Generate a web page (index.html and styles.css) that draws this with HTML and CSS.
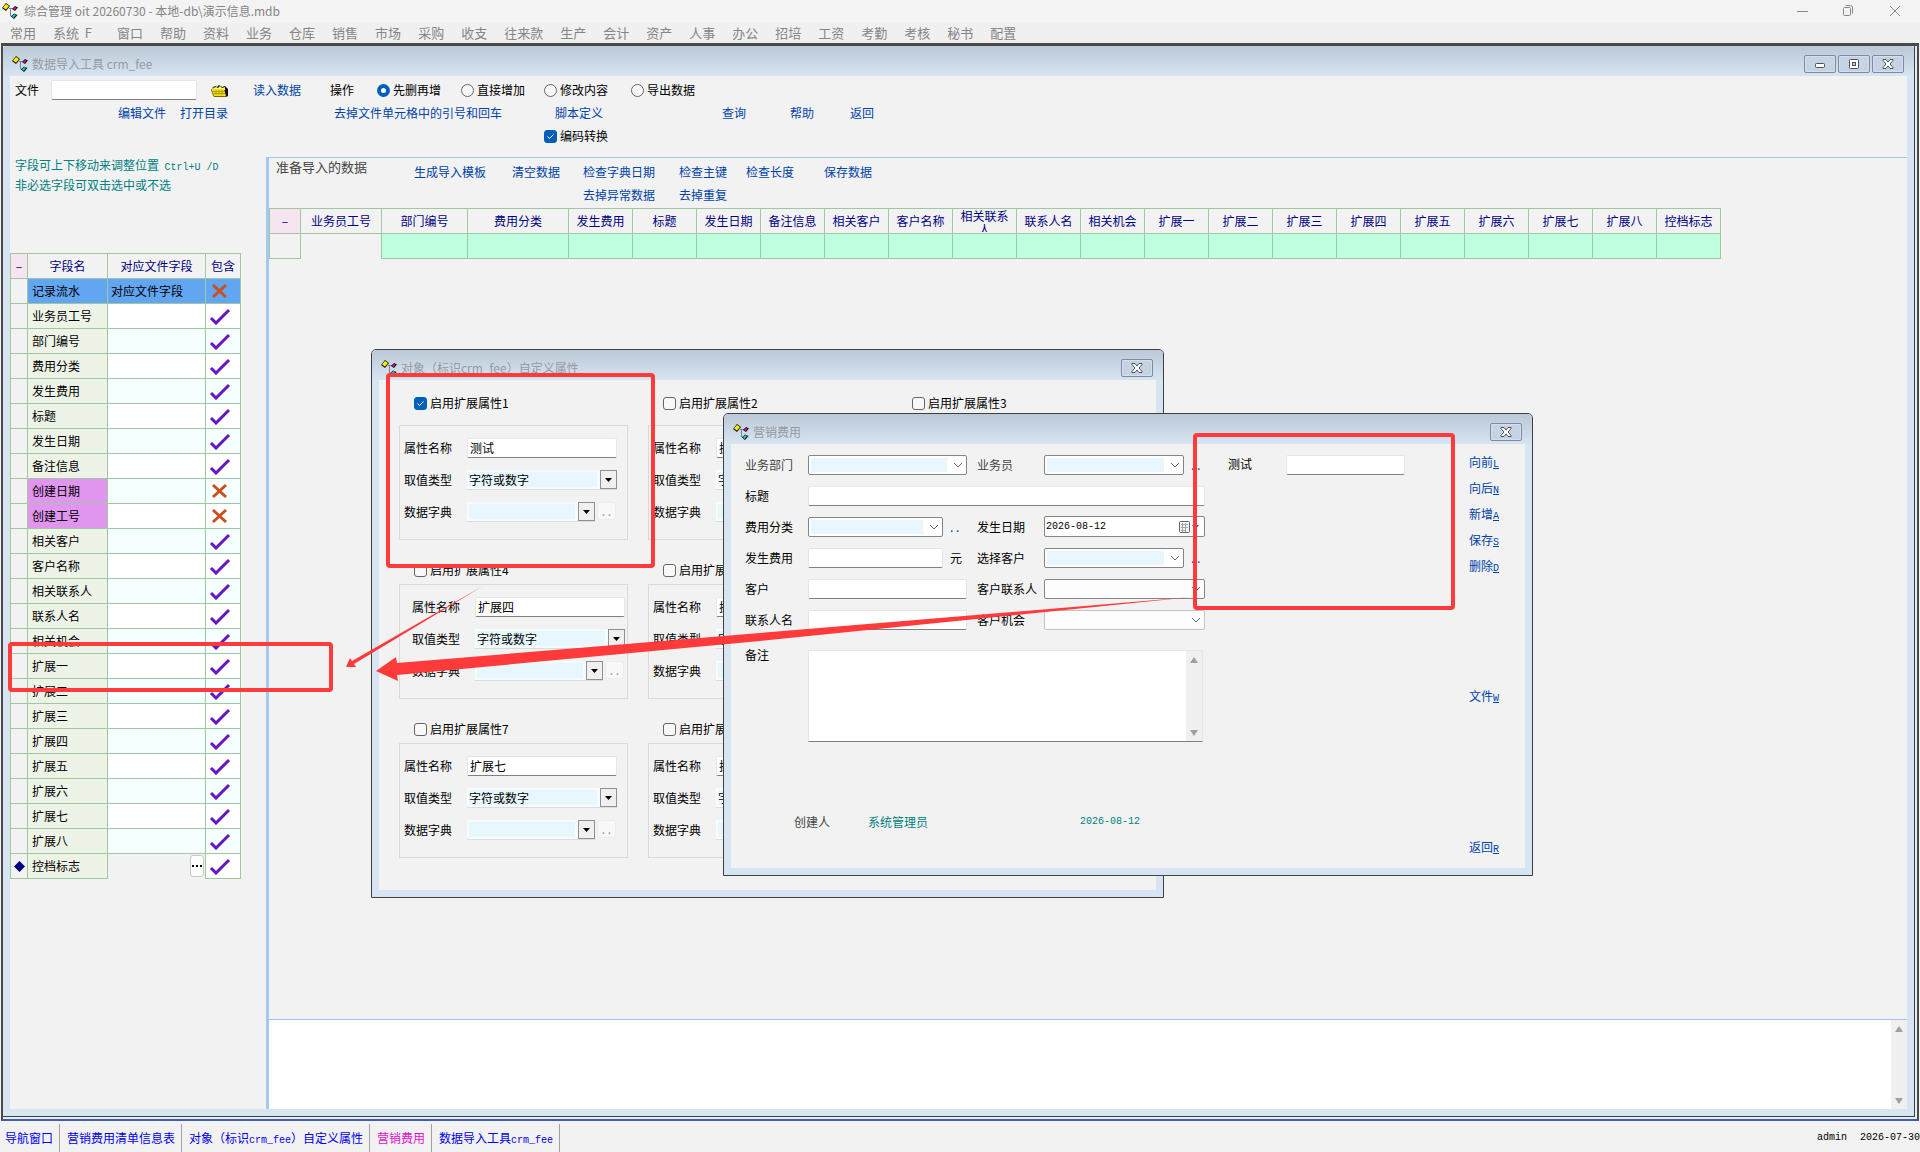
FILE: index.html
```
<!DOCTYPE html>
<html lang="zh-CN">
<head>
  <meta charset="UTF-8">
  <meta name="viewport" content="width=device-width, initial-scale=1.0">
  <title>综合管理 oit 20260730</title>
  <link rel="stylesheet" href="styles.css">
</head>
<body>
  <!-- shared icons -->
  <svg class="sprites" width="0" height="0">
    <symbol id="app" viewBox="0 0 16 16">
      <path d="M7 5.500h4M8.500 6v7h2" fill="none" stroke="#808080"/>
      <path d="M0 5l4-5 4 3-4 5z" fill="#111"/>
      <path d="M1 4.500l3-3.500 3 2-3 3.500z" fill="#ffee00"/>
      <path d="M10 6l3-3 3 1.500-3 3.500z" fill="#111"/>
      <path d="M11 5.500l2-1.500 1.500 1-2 2z" fill="#e000a0"/>
      <path d="M9 13.500l3-3 3.500 1.500-3.500 4z" fill="#111"/>
      <path d="M10 13l2.500-2 1.500 1-2.500 3z" fill="#00d0d0"/>
    </symbol>
    <symbol id="yes" viewBox="0 0 24 18">
      <path d="M2 11l5 5L20 3" fill="none" stroke="#6614c8" stroke-width="3"/>
    </symbol>
    <symbol id="no" viewBox="0 0 24 18">
      <path d="M4 3l13 12M17 3L4 15" fill="none" stroke="#c8501e" stroke-width="3"/>
    </symbol>
    <symbol id="close" viewBox="0 0 12 10">
      <path d="M1 .5h3l2 2.500 2-2.500h3v1L8 5l3 3.500v1H8L6 7 4 9.500H1v-1L4 5 1 1.500z" fill="#fff" stroke="#4a5058"/>
    </symbol>
  </svg>

  <header class="titlebar">
    <svg class="app-icon"><use href="#app"/></svg>
    <h1>综合管理 oit 20260730 - 本地-db\演示信息.mdb</h1>
    <div class="win-controls">
      <button aria-label="最小化"><svg width="12" height="12"><path d="M0 6.500h11" stroke="#888"/></svg></button>
      <button aria-label="还原"><svg width="12" height="12"><path d="M.5 3.500a1 1 0 0 1 1-1h5a1 1 0 0 1 1 1v6a1 1 0 0 1-1 1h-5a1 1 0 0 1-1-1zM2.500.5h5a2 2 0 0 1 2 2v6" fill="none" stroke="#888"/></svg></button>
      <button aria-label="关闭"><svg width="12" height="12"><path d="M1 1l10 10M11 1L1 11" stroke="#888"/></svg></button>
    </div>
  </header>

  <nav class="menu">
    <a href="#">常用</a>
    <a href="#" class="menu-system">系统&nbsp; F</a>
    <a href="#">窗口</a>
    <a href="#">帮助</a>
    <a href="#">资料</a>
    <a href="#">业务</a>
    <a href="#">仓库</a>
    <a href="#">销售</a>
    <a href="#">市场</a>
    <a href="#">采购</a>
    <a href="#">收支</a>
    <a href="#">往来款</a>
    <a href="#">生产</a>
    <a href="#">会计</a>
    <a href="#">资产</a>
    <a href="#">人事</a>
    <a href="#">办公</a>
    <a href="#">招培</a>
    <a href="#">工资</a>
    <a href="#">考勤</a>
    <a href="#">考核</a>
    <a href="#">秘书</a>
    <a href="#">配置</a>
  </nav>

  <main class="mdi">
    <section class="window import">
      <div class="caption">
        <svg class="app-icon"><use href="#app"/></svg>
        <h2>数据导入工具 crm_fee</h2>
        <div class="caption-buttons">
          <button aria-label="最小化"><svg width="12" height="10"><rect x="1.500" y="4.500" width="9" height="4" rx="1" fill="#fff" stroke="#4a5058"/></svg></button>
          <button aria-label="最大化"><svg width="12" height="10"><rect x="1.500" y=".5" width="9" height="9" rx="1" fill="#fff" stroke="#4a5058"/><rect x="4.500" y="3.500" width="3" height="3" fill="#c4d0de" stroke="#4a5058"/></svg></button>
          <button aria-label="关闭"><svg width="12" height="10"><use href="#close"/></svg></button>
        </div>
      </div>

      <div class="client">
        <form class="toolbar">
          <label for="file">文件</label>
          <input type="text" id="file" class="field tb-file">
          <button type="button" class="folder" aria-label="选择文件">
            <svg width="17" height="13"><path d="M1 4l3-2 2 1 2-2 3 2 3-1 3 3v7l-2 1z" fill="#111"/><path d="M2 4l3-1 2 1 2-2 2 2 3-1v3H3z" fill="#fff27a"/><path d="M0 5h13l2 7H3z" fill="#f0e020"/><path d="M2 7.500h11M3 9.500h11M5 6v5M8 6v5M11 6v5" stroke="#b0a400"/><path d="M0 5l3 7.500h12" fill="none" stroke="#706800"/></svg>
          </button>
          <a href="#" class="tb-read">读入数据</a>
          <span class="tb-mode">操作</span>
          <label class="tb-r1"><input type="radio" name="mode" checked>先删再增</label>
          <label class="tb-r2"><input type="radio" name="mode">直接增加</label>
          <label class="tb-r3"><input type="radio" name="mode">修改内容</label>
          <label class="tb-r4"><input type="radio" name="mode">导出数据</label>
          <a href="#" class="tb-edit">编辑文件</a>
          <a href="#" class="tb-open">打开目录</a>
          <a href="#" class="tb-strip">去掉文件单元格中的引号和回车</a>
          <a href="#" class="tb-script">脚本定义</a>
          <a href="#" class="tb-query">查询</a>
          <a href="#" class="tb-help">帮助</a>
          <a href="#" class="tb-back">返回</a>
          <label class="tb-code"><input type="checkbox" checked>编码转换</label>
        </form>

        <div class="panes">
          <aside class="fields">
            <p class="hint">字段可上下移动来调整位置&nbsp; <span class="mono">Ctrl+U /D</span><br>非必选字段可双击选中或不选</p>
            <table class="grid field-grid">
              <colgroup><col class="c-mark"><col class="c-name"><col class="c-map"><col class="c-use"></colgroup>
              <thead>
                <tr><th class="corner">–</th><th>字段名</th><th>对应文件字段</th><th>包含</th></tr>
              </thead>
              <tbody>
                <tr class="selected"><td></td><td>记录流水</td><td>对应文件字段</td><td><svg><use href="#no"/></svg></td></tr>
                <tr><td></td><td>业务员工号</td><td></td><td><svg><use href="#yes"/></svg></td></tr>
                <tr><td></td><td>部门编号</td><td></td><td><svg><use href="#yes"/></svg></td></tr>
                <tr><td></td><td>费用分类</td><td></td><td><svg><use href="#yes"/></svg></td></tr>
                <tr><td></td><td>发生费用</td><td></td><td><svg><use href="#yes"/></svg></td></tr>
                <tr><td></td><td>标题</td><td></td><td><svg><use href="#yes"/></svg></td></tr>
                <tr><td></td><td>发生日期</td><td></td><td><svg><use href="#yes"/></svg></td></tr>
                <tr><td></td><td>备注信息</td><td></td><td><svg><use href="#yes"/></svg></td></tr>
                <tr class="auto"><td></td><td>创建日期</td><td></td><td><svg><use href="#no"/></svg></td></tr>
                <tr class="auto"><td></td><td>创建工号</td><td></td><td><svg><use href="#no"/></svg></td></tr>
                <tr><td></td><td>相关客户</td><td></td><td><svg><use href="#yes"/></svg></td></tr>
                <tr><td></td><td>客户名称</td><td></td><td><svg><use href="#yes"/></svg></td></tr>
                <tr><td></td><td>相关联系人</td><td></td><td><svg><use href="#yes"/></svg></td></tr>
                <tr><td></td><td>联系人名</td><td></td><td><svg><use href="#yes"/></svg></td></tr>
                <tr><td></td><td>相关机会</td><td></td><td><svg><use href="#yes"/></svg></td></tr>
                <tr><td></td><td>扩展一</td><td></td><td><svg><use href="#yes"/></svg></td></tr>
                <tr><td></td><td>扩展二</td><td></td><td><svg><use href="#yes"/></svg></td></tr>
                <tr><td></td><td>扩展三</td><td></td><td><svg><use href="#yes"/></svg></td></tr>
                <tr><td></td><td>扩展四</td><td></td><td><svg><use href="#yes"/></svg></td></tr>
                <tr><td></td><td>扩展五</td><td></td><td><svg><use href="#yes"/></svg></td></tr>
                <tr><td></td><td>扩展六</td><td></td><td><svg><use href="#yes"/></svg></td></tr>
                <tr><td></td><td>扩展七</td><td></td><td><svg><use href="#yes"/></svg></td></tr>
                <tr><td></td><td>扩展八</td><td></td><td><svg><use href="#yes"/></svg></td></tr>
                <tr class="current"><td><svg class="marker" viewBox="0 0 12 12"><path d="M6 0l6 6-6 6-6-6z" fill="#000080"/></svg></td><td>控档标志</td><td><button class="more" aria-label="更多"><svg class="dots3" viewBox="0 0 11 2"><path d="M0 0h2v2H0zM4 0h2v2H4zM8 0h2v2H8z"/></svg></button></td><td><svg><use href="#yes"/></svg></td></tr>
              </tbody>
            </table>
          </aside>

          <section class="data">
            <div class="data-tools">
              <h3>准备导入的数据</h3>
              <a href="#">生成导入模板</a>
              <a href="#">清空数据</a>
              <a href="#">检查字典日期</a>
              <a href="#">检查主键</a>
              <a href="#">检查长度</a>
              <a href="#">保存数据</a>
              <a href="#" class="second-abnormal">去掉异常数据</a>
              <a href="#" class="second-repeat">去掉重复</a>
            </div>
            <table class="grid data-grid">
              <colgroup><col class="d-mark"><col class="d-staff"><col class="d-dept"><col class="d-kind"><col span="18" class="d-std"></colgroup>
              <thead>
                <tr>
                  <th class="corner">–</th>
                  <th>业务员工号</th>
                  <th>部门编号</th>
                  <th>费用分类</th>
                  <th>发生费用</th>
                  <th>标题</th>
                  <th>发生日期</th>
                  <th>备注信息</th>
                  <th>相关客户</th>
                  <th>客户名称</th>
                  <th><div>相关联系人</div></th>
                  <th>联系人名</th>
                  <th>相关机会</th>
                  <th>扩展一</th>
                  <th>扩展二</th>
                  <th>扩展三</th>
                  <th>扩展四</th>
                  <th>扩展五</th>
                  <th>扩展六</th>
                  <th>扩展七</th>
                  <th>扩展八</th>
                  <th>控档标志</th>
                </tr>
              </thead>
              <tbody>
                <tr><td></td><td></td><td></td><td></td><td></td><td></td><td></td><td></td><td></td><td></td><td></td><td></td><td></td><td></td><td></td><td></td><td></td><td></td><td></td><td></td><td></td><td></td></tr>
              </tbody>
            </table>
            <div class="log">
              <textarea aria-label="日志"></textarea>
              <div class="scroll"><span class="up"></span><span class="down"></span></div>
            </div>
          </section>
        </div>
      </div>
    </section>
  </main>

  <footer class="status">
    <a href="#">导航窗口</a>
    <a href="#">营销费用清单信息表</a>
    <a href="#">对象（标识<span class="mono">crm_fee</span>）自定义属性</a>
    <a href="#" class="active">营销费用</a>
    <a href="#">数据导入工具<span class="mono">crm_fee</span></a>
    <span class="mono user">admin</span>
    <span class="mono">2026-07-30</span>
  </footer>

  <section class="window floating attrs">
    <div class="caption">
      <svg class="app-icon"><use href="#app"/></svg>
      <h2>对象（标识crm_fee）自定义属性</h2>
      <div class="caption-buttons"><button aria-label="关闭"><svg width="12" height="10"><use href="#close"/></svg></button></div>
    </div>
    <form class="client attr-list">
      <div class="attr first">
        <label><input type="checkbox" checked>启用扩展属性1</label>
        <fieldset>
          <label for="n1">属性名称</label><input type="text" id="n1" class="field" value="测试">
          <label for="t1">取值类型</label><select id="t1" class="drop"><option>字符或数字</option></select>
          <label for="d1">数据字典</label><div class="dict"><select id="d1" class="drop"></select><button type="button" disabled>. .</button></div>
        </fieldset>
      </div>
      <div class="attr first">
        <label><input type="checkbox">启用扩展属性2</label>
        <fieldset>
          <label for="n2">属性名称</label><input type="text" id="n2" class="field" value="扩展二">
          <label for="t2">取值类型</label><select id="t2" class="drop"><option>字符或数字</option></select>
          <label for="d2">数据字典</label><div class="dict"><select id="d2" class="drop"></select><button type="button" disabled>. .</button></div>
        </fieldset>
      </div>
      <div class="attr first">
        <label><input type="checkbox">启用扩展属性3</label>
      </div>
      <div class="attr indent">
        <label><input type="checkbox">启用扩展属性4</label>
        <fieldset>
          <label for="n4">属性名称</label><input type="text" id="n4" class="field" value="扩展四">
          <label for="t4">取值类型</label><select id="t4" class="drop"><option>字符或数字</option></select>
          <label for="d4">数据字典</label><div class="dict"><select id="d4" class="drop"></select><button type="button" disabled>. .</button></div>
        </fieldset>
      </div>
      <div class="attr">
        <label><input type="checkbox">启用扩展属性5</label>
        <fieldset>
          <label for="n5">属性名称</label><input type="text" id="n5" class="field" value="扩展五">
          <label for="t5">取值类型</label><select id="t5" class="drop"><option>字符或数字</option></select>
          <label for="d5">数据字典</label><div class="dict"><select id="d5" class="drop"></select><button type="button" disabled>. .</button></div>
        </fieldset>
      </div>
      <div></div>
      <div class="attr">
        <label><input type="checkbox">启用扩展属性7</label>
        <fieldset>
          <label for="n7">属性名称</label><input type="text" id="n7" class="field" value="扩展七">
          <label for="t7">取值类型</label><select id="t7" class="drop"><option>字符或数字</option></select>
          <label for="d7">数据字典</label><div class="dict"><select id="d7" class="drop"></select><button type="button" disabled>. .</button></div>
        </fieldset>
      </div>
      <div class="attr">
        <label><input type="checkbox">启用扩展属性8</label>
        <fieldset>
          <label for="n8">属性名称</label><input type="text" id="n8" class="field" value="扩展八">
          <label for="t8">取值类型</label><select id="t8" class="drop"><option>字符或数字</option></select>
          <label for="d8">数据字典</label><div class="dict"><select id="d8" class="drop"></select><button type="button" disabled>. .</button></div>
        </fieldset>
      </div>
    </form>
  </section>

  <section class="window floating fee">
    <div class="caption">
      <svg class="app-icon"><use href="#app"/></svg>
      <h2>营销费用</h2>
      <div class="caption-buttons"><button aria-label="关闭"><svg width="12" height="10"><use href="#close"/></svg></button></div>
    </div>
    <form class="client fee-body">
      <div class="fee-main">
        <div class="fee-grid">
          <label for="dept" class="soft">业务部门</label>
          <div><select id="dept" class="combo w-mid"></select></div>
          <label for="staff" class="soft">业务员</label>
          <div><select id="staff" class="combo w-pick"></select><a href="#" class="pick" aria-label="选择业务员">. .</a></div>

          <label for="subject">标题</label>
          <div class="wide"><input type="text" id="subject" class="field"></div>

          <label for="kind">费用分类</label>
          <div><select id="kind" class="combo w-short"></select><a href="#" class="pick" aria-label="选择分类">. .</a></div>
          <label for="day">发生日期</label>
          <div class="date">
            <input type="text" id="day" value="2026-08-12">
            <svg width="26" height="14"><rect x="1.500" y="1.500" width="10" height="11" rx="1" fill="#f4f4f8" stroke="#666"/><path d="M3 4.500h7M3 7.500h7M3 10.500h5M4.500 3v9M7.500 3v9" stroke="#9aa8c0"/><path d="M14 5h7l-3.500 4z" fill="#2a4a80"/></svg>
          </div>

          <label for="amount">发生费用</label>
          <div><input type="text" id="amount" class="field w-short"><span>元</span></div>
          <label for="cust">选择客户</label>
          <div><select id="cust" class="combo w-pick"></select><a href="#" class="pick" aria-label="选择客户">. .</a></div>

          <label for="client">客户</label>
          <div><input type="text" id="client" class="field w-mid"></div>
          <label for="contact">客户联系人</label>
          <div><select id="contact" class="combo plain"></select></div>

          <label for="cname">联系人名</label>
          <div><input type="text" id="cname" class="field w-mid"></div>
          <label for="chance">客户机会</label>
          <div><select id="chance" class="combo plain off"></select></div>
        </div>
        <div class="remark">
          <label for="remark">备注</label>
          <div class="memo">
            <textarea id="remark"></textarea>
            <div class="scroll"><span class="up"></span><span class="down"></span></div>
          </div>
        </div>
        <div class="created">
          <span class="soft">创建人</span>
          <span>系统管理员</span>
          <span class="mono">2026-08-12</span>
        </div>
      </div>
      <div class="fee-extra">
        <label for="ext1">测试</label>
        <input type="text" id="ext1" class="field">
      </div>
      <div class="fee-actions">
        <a href="#">向前<u class="mono">L</u></a>
        <a href="#">向后<u class="mono">N</u></a>
        <a href="#">新增<u class="mono">A</u></a>
        <a href="#">保存<u class="mono">S</u></a>
        <a href="#">删除<u class="mono">D</u></a>
        <a href="#" class="act-file">文件<u class="mono">W</u></a>
        <a href="#" class="act-back">返回<u class="mono">R</u></a>
      </div>
    </form>
  </section>

  <!-- red marks over the windows -->
  <svg class="marks" width="1470" height="700">
    <g fill="none" stroke="#ff3a3a" stroke-width="4">
      <rect x="388" y="375" width="265" height="191" rx="2"/>
      <rect x="1195" y="435" width="258" height="173" rx="2"/>
      <rect x="10" y="644" width="321" height="46" rx="2"/>
    </g>
    <g fill="#ff3a3a">
      <path d="M346 667l4-9 2 3L483 586 354 664l2 3z"/>
      <path d="M376 671l20-14 1 6L760 633 1192 597 760 641 397 675l1 6z"/>
    </g>
  </svg>
</body>
</html>
```
FILE: styles.css
```
* {
  box-sizing: border-box;
}

body {
  margin: 0;
  min-height: 100vh;
  display: flex;
  flex-direction: column;
  position: relative;
  overflow: hidden;
  background: #f2f2f2;
  color: #000;
  font: 12px/16px "Noto Sans CJK SC", sans-serif;
}

a {
  color: #0042a8;
  text-decoration: none;
  white-space: nowrap;
}

h1, h2, h3, p {
  margin: 0;
  font-size: 12px;
  font-weight: normal;
}

label, span {
  white-space: nowrap;
}

input, select, textarea, button {
  font: inherit;
  color: inherit;
  margin: 0;
  border-radius: 0;
}

.sprites {
  position: absolute;
}

.mono {
  font-family: "Liberation Mono", monospace;
  font-size: 10px;
}

.app-icon {
  width: 16px;
  height: 16px;
  flex: none;
}

/* main title bar and menu */
.titlebar {
  height: 23px;
  display: flex;
  align-items: center;
  gap: 6px;
  padding: 0 2px 2px;
  background: #f3f3f3;
}

.titlebar h1 {
  color: #858585;
}

.win-controls {
  margin-left: auto;
  display: flex;
  gap: 34px;
  padding-right: 17px;
}

.win-controls button {
  display: flex;
  padding: 0;
  border: 0;
  background: none;
}

.menu {
  height: 20px;
  display: flex;
  align-items: center;
  gap: 17px;
  padding-left: 10px;
  background: #f0f0f0;
  font-size: 13px;
}

.menu a {
  color: #858585;
}

.menu-system {
  width: 47px;
}

/* desktop area and windows */
.mdi {
  flex: 1;
  display: flex;
  margin: 0 1px 1px;
  padding: 0 2px 2px 0;
  border: 2px solid #4a4a4a;
  border-top-width: 3px;
  border-bottom-color: #3d5fae;
  background: #e4ecf5;
}

.window {
  display: flex;
  flex-direction: column;
  padding: 0 7px 7px;
  border: 1px solid #404040;
  background: #d7e4f2;
}

.import {
  flex: 1;
  min-width: 0;
  border-width: 0 1px 1px 0;
}

.floating {
  position: absolute;
  border-radius: 5px 5px 0 0;
}

.caption {
  height: 30px;
  flex: none;
  display: flex;
  align-items: center;
  gap: 4px;
  margin: 0 -7px;
  padding: 5px 2px 0 9px;
  background: linear-gradient(#bbc9d7, #d7e4f2);
  border-radius: 4px 4px 0 0;
}

.caption h2 {
  color: #969ba2;
}

.caption-buttons {
  margin-left: auto;
  display: flex;
  gap: 2px;
  padding-right: 8px;
}

.caption-buttons button {
  width: 32px;
  height: 18px;
  display: flex;
  align-items: center;
  justify-content: center;
  padding: 0;
  border: 1px solid #7c8aa5;
  border-radius: 2px;
  background: #c6d3e2;
  box-shadow: inset 0 0 0 1px #d5dfea;
}

.client {
  flex: 1;
  background: #f2f2f2;
}

/* controls */
.field {
  width: 100%;
  height: 20px;
  padding: 0 2px 2px;
  border: 1px solid #e6e6e6;
  border-bottom-color: #808080;
  border-radius: 2px;
  background: #fff;
}

input[type="checkbox"],
input[type="radio"] {
  appearance: none;
  width: 13px;
  height: 13px;
  flex: none;
  border: 1px solid #666;
  border-radius: 3px;
  background: #f8f8f8;
}

input[type="checkbox"]:checked {
  border-color: #005fb8;
  background: #005fb8 url("data:image/svg+xml,%3Csvg xmlns='http://www.w3.org/2000/svg' width='11' height='11'%3E%3Cpath d='M2.500 5.500l2 2 4-4' fill='none' stroke='%23fff'/%3E%3C/svg%3E") center no-repeat;
}

input[type="radio"] {
  border-radius: 50%;
}

input[type="radio"]:checked {
  border: 4px solid #005fb8;
  background: #fff;
}

.combo {
  appearance: none;
  width: 100%;
  height: 20px;
  padding: 0 4px;
  border: 1px solid #858585;
  border-radius: 2px;
  background:
    url("data:image/svg+xml,%3Csvg xmlns='http://www.w3.org/2000/svg' width='10' height='6'%3E%3Cpath d='M1 1l4 4 4-4' fill='none' stroke='%23666'/%3E%3C/svg%3E") right 3px center no-repeat,
    linear-gradient(#e8f7fd, #e8f7fd) 2px 2px / calc(100% - 21px) calc(100% - 4px) no-repeat,
    #fff;
}

.combo.plain {
  background:
    url("data:image/svg+xml,%3Csvg xmlns='http://www.w3.org/2000/svg' width='10' height='6'%3E%3Cpath d='M1 1l4 4 4-4' fill='none' stroke='%23666'/%3E%3C/svg%3E") right 3px center no-repeat,
    #fdfdfd;
}

.combo.off {
  border-color: #c4c4c4;
}

.drop {
  appearance: none;
  width: 150px;
  height: 20px;
  padding: 0 2px;
  border: 0;
  border-bottom: 1px solid #dcdcdc;
  background:
    url("data:image/svg+xml,%3Csvg xmlns='http://www.w3.org/2000/svg' width='17' height='19'%3E%3Crect x='.5' y='.5' width='16' height='18' fill='%23f0f0f0' stroke='%23909090'/%3E%3Cpath d='M5 8h7l-3.500 4z'/%3E%3C/svg%3E") right top no-repeat,
    linear-gradient(#e8f7fd, #e8f7fd) 2px 2px / calc(100% - 22px) 15px no-repeat,
    #f6fcfe;
}

.scroll {
  width: 16px;
  display: flex;
  flex-direction: column;
  justify-content: space-between;
  align-items: center;
  padding: 6px 0 5px;
  background: #f0f0f0;
}

.scroll span {
  border: 4px solid transparent;
}

.scroll .up {
  border-top: 0;
  border-bottom: 6px solid #a0a0a0;
}

.scroll .down {
  border-bottom: 0;
  border-top: 6px solid #a0a0a0;
}

textarea {
  flex: 1;
  padding: 2px;
  border: 0;
  outline: 0;
  resize: none;
  background: #fff;
}

/* import tool */
.import .client {
  display: flex;
  flex-direction: column;
}

.toolbar {
  display: grid;
  grid-template-columns: 36px 67px 62px 31px 42px 77px 4px 43px 84px 83px 11px 76px 91px 68px 60px auto;
  grid-template-rows: repeat(3, 20px);
  row-gap: 3px;
  align-items: center;
  height: 81px;
  padding: 4px 0 0 5px;
}

.toolbar label {
  display: flex;
  align-items: center;
  gap: 3px;
}

.tb-file {
  grid-column: 2 / 5;
  width: 146px;
}

.folder {
  grid-column: 5;
  display: flex;
  padding: 0;
  border: 0;
  background: none;
}

.tb-read { grid-column: 6; }
.tb-mode { grid-column: 7 / 9; }
.tb-r1 { grid-column: 9; }
.tb-r2 { grid-column: 10; }
.tb-r3 { grid-column: 11 / 13; }
.tb-r4 { grid-column: 13; }
.tb-edit { grid-area: 2 / 3; }
.tb-open { grid-area: 2 / 4; }
.tb-strip { grid-area: 2 / 8; }
.tb-script { grid-area: 2 / 12; }
.tb-query { grid-area: 2 / 14; }
.tb-help { grid-area: 2 / 15; }
.tb-back { grid-area: 2 / 16; }
.tb-code { grid-area: 3 / 11; }

.panes {
  flex: 1;
  display: flex;
}

.fields {
  width: 256px;
  flex: none;
}

.hint {
  height: 96px;
  padding-left: 5px;
  color: #008080;
  margin-top: -1px;
  margin-bottom: 1px;
  line-height: 17px;
}

.grid {
  border-collapse: collapse;
  table-layout: fixed;
  width: 1px;
}

.grid th,
.grid td {
  height: 25px;
  padding: 0 4px 1px;
  border: 1px solid #a0c8a0;
  font-weight: normal;
  line-height: 14px;
}

.grid th {
  padding: 0 6px 1px;
  color: #000080;
}

.grid .corner {
  padding: 0;
  background: #f6e4f0;
}

.c-mark { width: 17px; }
.c-name { width: 80px; }
.c-map { width: 98px; }
.c-use { width: 35px; }

.field-grid th {
  padding: 0 0 1px;
}

.field-grid td:first-child {
  padding: 0;
}

.field-grid td:nth-child(2) {
  background: #eef3e8;
}

.field-grid td:nth-child(n+3) {
  padding-left: 3px;
  background: #fff;
}

.field-grid tr:nth-child(odd) td:nth-child(n+3) {
  background: #f5ffff;
}

.field-grid .selected td:nth-child(n+2) {
  background: #62a5f0;
}

.field-grid tr.selected td:nth-child(n+3) {
  background: #62a5f0;
}

.field-grid .auto td:nth-child(2) {
  background: #e096ee;
}

.field-grid .current td:nth-child(3) {
  padding: 0 1px;
  border-bottom: 0;
  background: #f2f2f2;
  text-align: right;
}

.field-grid tr.current td:nth-child(4) {
  background: #fff;
}

.field-grid td svg {
  width: 24px;
  height: 18px;
  display: block;
}

.field-grid td .marker {
  width: 11px;
  height: 11px;
  margin: 0 auto;
}

.more {
  width: 14px;
  height: 22px;
  padding: 0 1px;
  border: 1px solid #c8c8c8;
  border-radius: 3px;
  background: #fdfdfd;
  vertical-align: top;
}

.field-grid td .dots3 {
  width: 11px;
  height: 2px;
}

.data {
  flex: 1;
  min-width: 0;
  display: flex;
  flex-direction: column;
  border-left: 3px solid #a5c8f0;
  border-top: 1px solid #a5c3ee;
}

.data-tools {
  display: grid;
  grid-template-columns: 138px 98px 71px 96px 67px 78px auto;
  grid-template-rows: 22px 23px;
  align-items: center;
  padding: 3px 0 2px 7px;
}

.data-tools h3 {
  align-self: start;
  font-size: 13px;
  line-height: 12px;
  color: #444;
}

.second-abnormal {
  grid-column: 4;
}

.d-mark { width: 31px; }
.d-staff { width: 81px; }
.d-dept { width: 86px; }
.d-kind { width: 101px; }
.d-std { width: 64px; }

.data-grid th div {
  height: 23px;
  overflow: hidden;
}

.data-grid td {
  background: #bfffdf;
}

.data-grid td:nth-child(-n+2) {
  background: #f2f2f2;
}

.data-grid td:nth-child(2) {
  border-bottom: 0;
  border-right: 0;
}

.log {
  height: 90px;
  display: flex;
  margin-top: auto;
  border-top: 1px solid #a5c3ee;
}

/* bottom bar */
.status {
  height: 30px;
  display: flex;
  align-items: stretch;
  gap: 7px;
  padding: 2px 0 0 5px;
  line-height: 28px;
}

.status a {
  padding-right: 6px;
  border-right: 1px solid #a0a0a0;
  color: #0000f0;
}

.status .active {
  color: #e010d0;
}

.status .user {
  margin-left: auto;
  padding-right: 6px;
}

/* custom attributes window */
.attrs {
  left: 371px;
  top: 349px;
  width: 793px;
}

.attr-list {
  display: grid;
  grid-template-columns: repeat(3, 229px);
  gap: 20px;
  padding: 13px 0 32px 20px;
}

.attr > label {
  height: 20px;
  display: flex;
  align-items: center;
  gap: 3px;
  padding-left: 15px;
}

.attr fieldset {
  display: grid;
  grid-template-columns: 63px 150px;
  grid-auto-rows: 20px;
  row-gap: 12px;
  align-items: center;
  height: 115px;
  margin: 4px 0 0;
  padding: 12px 0 0 4px;
  border: 1px solid #dadada;
}

.attr.first fieldset {
  margin-top: 12px;
}

.attr.indent fieldset {
  padding-left: 12px;
}

.dict {
  display: flex;
  gap: 2px;
}

.dict .drop {
  width: 128px;
}

.dict button {
  width: 19px;
  height: 18px;
  padding: 0;
  border: 1px solid #ececec;
  border-radius: 3px;
  background: #f8f8f8;
  color: #999;
  line-height: 14px;
}

/* marketing fee window */
.fee {
  left: 723px;
  top: 413px;
  width: 810px;
}

.fee-body {
  display: flex;
  padding: 5px 0 8px 14px;
}

.fee-main {
  width: 460px;
}

.fee-grid {
  display: grid;
  grid-template-columns: 63px 169px 67px 161px;
  grid-auto-rows: 31px;
  align-items: center;
}

.fee-grid > div {
  display: flex;
  align-items: center;
  gap: 7px;
}

.fee-grid .wide {
  grid-column: 2 / 5;
}

.soft {
  color: #444;
}

.w-short { width: 135px; }
.w-mid { width: 159px; }
.w-pick { width: 140px; }

.fee-grid .date {
  height: 21px;
  border: 1px solid #858585;
  border-radius: 2px;
  background: #fff;
}

.date input {
  flex: 1;
  min-width: 0;
  padding: 0 1px;
  border: 0;
  background: none;
  font: 10px/16px "Liberation Mono", monospace;
}

.remark {
  display: flex;
  padding-top: 15px;
}

.remark label {
  width: 63px;
  line-height: 10px;
}

.memo {
  width: 395px;
  height: 92px;
  display: flex;
  border: 1px solid #e6e6e6;
  border-bottom-color: #808080;
}

.created {
  display: grid;
  grid-template-columns: 74px 212px auto;
  padding: 72px 0 0 49px;
  color: #008080;
}

.fee-extra {
  display: flex;
  align-items: flex-start;
  padding: 6px 0 0 23px;
  line-height: 18px;
}

.fee-extra label {
  width: 58px;
}

.fee-extra .field {
  width: 119px;
}

.fee-actions {
  width: 56px;
  display: flex;
  flex-direction: column;
  margin-left: auto;
  line-height: 26px;
}

.fee-actions a {
  height: 26px;
}

.fee-actions .act-file {
  margin-top: 104px;
}

.fee-actions .act-back {
  margin-top: 125px;
}

.marks {
  position: absolute;
  left: 0;
  top: 0;
  pointer-events: none;
}
```
